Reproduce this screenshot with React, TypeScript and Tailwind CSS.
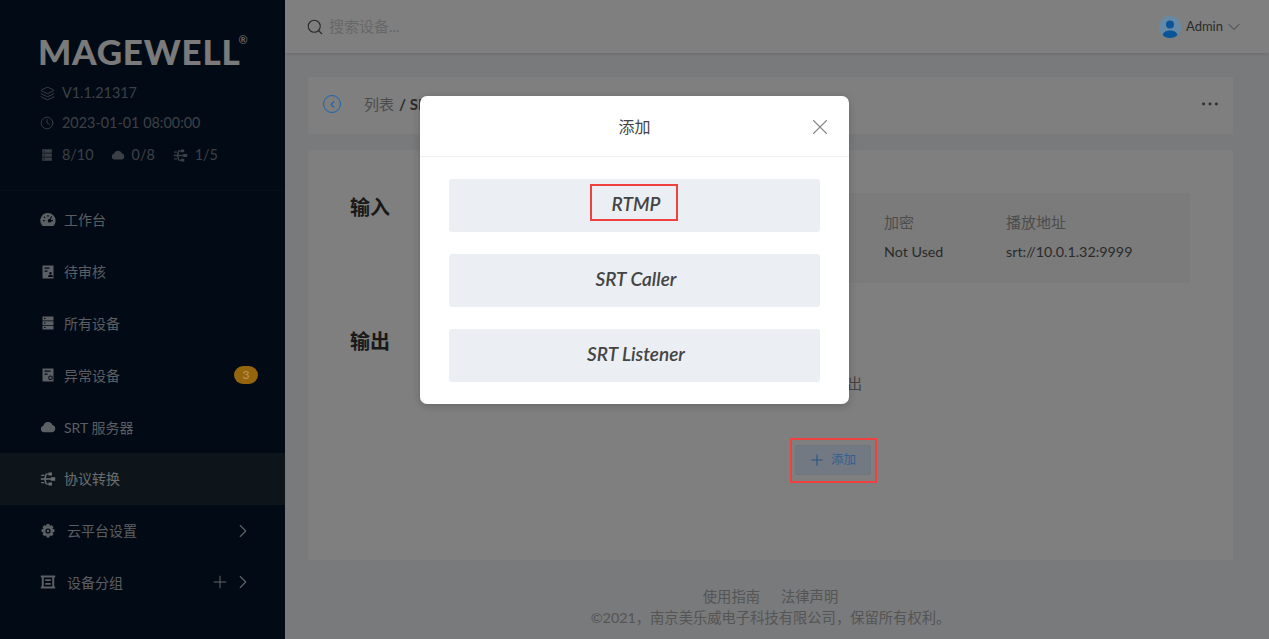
import React from "react";
import { ChevronDown, ChevronLeft, ChevronRight, Clock, Layers, MoreHorizontal, Plus, Search, X } from "lucide-react";

const FONT = 'font-["Lato","Noto_Sans_CJK_SC",sans-serif]';

const I = ({ children, className = "" }: { children: React.ReactNode; className?: string }) => (
  <svg viewBox="0 0 16 16" fill="currentColor" className={className}>{children}</svg>
);
const Gauge = ({ className }: { className?: string }) => (
  <I className={className}>
    <path fillRule="evenodd" d="M8 1a7.600 7.600 0 0 1 7.600 7.600c0 2-.7 3.800-1.900 5.100-.2.200-.4.300-.7.300H3c-.3 0-.5-.1-.7-.3A7.600 7.600 0 0 1 8 1Zm-.6 2v1.700h1.200V3H7.400Zm3.700 1-1.300 3.100a1.700 1.700 0 1 0 1 .5L12 4.400l-.9-.4ZM3 8v1.200h1.700V8H3Zm8.300 0v1.200H13V8h-1.700ZM4.300 4.200l-.8.800 1.200 1.200.8-.8-1.200-1.200Z" />
  </I>
);
const DocUser = ({ className }: { className?: string }) => (
  <I className={className}>
    <path fillRule="evenodd" d="M2.500 1.500h11v13h-11v-13Zm2 2v1.200h5V3.500h-5Zm0 3v1.200h3V6.500h-3Zm6 1.500a1.300 1.300 0 1 0 0 2.600 1.300 1.300 0 0 0 0-2.600ZM8 13h5c0-1.400-1-2.200-2.500-2.200S8 11.600 8 13Z" />
  </I>
);
const DocWarn = ({ className }: { className?: string }) => (
  <I className={className}>
    <path fillRule="evenodd" d="M2.500 1.500h11v13h-11v-13Zm2 2v1.200h6V3.500h-6Zm0 3v1.200h3V6.500h-3Zm6 2a2.300 2.300 0 1 0 0 4.600 2.300 2.300 0 0 0 0-4.600Zm0 1a1.300 1.300 0 1 1 0 2.600 1.300 1.300 0 0 1 0-2.600Z" />
  </I>
);
const Server = ({ className }: { className?: string }) => (
  <I className={className}>
    <path fillRule="evenodd" d="M2.500 1.500h11v4h-11v-4Zm0 4.800h11v3.700h-11V6.300Zm0 4.500h11v3.700h-11v-3.700ZM4 3v1h1.500V3H4Zm0 4.600v1h1.500v-1H4Zm0 4.500v1h1.500v-1H4Z" />
  </I>
);
const Cloud = ({ className }: { className?: string }) => (
  <I className={className}>
    <path d="M4 13.200a3.300 3.300 0 0 1-.6-6.500A4.800 4.800 0 0 1 12.500 6a3.700 3.700 0 0 1-.2 7.200H4Z" />
  </I>
);
const Flow = ({ className }: { className?: string }) => (
  <I className={className}>
    <path d="M8.500 1.500H12v3H8.500v-.9H6.900L5.700 7.200h5.100v-.9h4.400v3.400h-4.400v-.9H5.700l1.200 3.600h1.600v-.9H12v3H8.500v-.9H5.700L4.200 8.800H.8V7.200h3.400l1.500-4.800h2.800v-.9ZM1.200 3.800h3.200V5H1.200V3.800Zm0 7.200h3.200v1.200H1.200V11Z" />
  </I>
);
const Gear = ({ className }: { className?: string }) => (
  <I className={className}>
    <path fillRule="evenodd" d="M6.600 1h2.800l.4 2 1.700-.9 2 2-1 1.700 2 .5v2.800l-2 .5 1 1.700-2 2-1.700-1-.4 2.200H6.600l-.4-2.200-1.700 1-2-2 1-1.700-2-.5V6.300l2-.5-1-1.700 2-2 1.700.9.400-2ZM8 5.400a2.600 2.600 0 1 0 0 5.200 2.600 2.600 0 0 0 0-5.200Zm0 1.300a1.300 1.300 0 1 1 0 2.600 1.300 1.300 0 0 1 0-2.600Z" />
  </I>
);
const Group = ({ className }: { className?: string }) => (
  <I className={className}>
    <path fillRule="evenodd" d="M.8 1.500h14.400v2h-1v9h1v2H.8v-2h1v-9h-1v-2Zm3 2v9h8.400v-9H3.800Zm1.400 1.700h5.600v1.700H5.200V5.200Zm0 3.800h5.600v1.700H5.200V9Z" />
  </I>
);

const NAV = [
  { label: "工作台", Icon: Gauge },
  { label: "待审核", Icon: DocUser },
  { label: "所有设备", Icon: Server },
  { label: "异常设备", Icon: DocWarn, badge: "3" },
  { label: "SRT 服务器", Icon: Cloud },
  { label: "协议转换", Icon: Flow, active: true },
  { label: "云平台设置", Icon: Gear, sub: true },
  { label: "设备分组", Icon: Group, sub: true, plus: true },
];

function Sidebar() {
  return (
    <aside className="w-[285px] shrink-0 h-full bg-[#04152a] flex flex-col">
      <div className="h-[191px] shrink-0 border-b border-[#0d1f33] pl-[40px] pt-[33px] text-[#76808c]">
        <div className="flex items-start h-[36px] text-[#f4f4f4] ml-[-2px]">
          <span className="text-[35px] leading-[36px] font-black tracking-[0.8px]">MAGEWELL</span>
          <span className="text-[11px] leading-[11px] ml-[-2px] mt-[1px]">®</span>
        </div>
        <div className="mt-[14px] flex items-center h-[20px] text-[14.4px]">
          <Layers className="w-[15px] h-[15px] mr-[7px]" strokeWidth={1.5} />V1.1.21317
        </div>
        <div className="mt-[10px] flex items-center h-[20px] text-[14.4px]">
          <Clock className="w-[14px] h-[14px] mr-[8px]" strokeWidth={1.5} />2023-01-01 08:00:00
        </div>
        <div className="mt-[12px] flex items-center h-[20px] text-[14.4px]">
          <Server className="w-[14px] h-[14px] mr-[8px]" />8/10
          <Cloud className="w-[14px] h-[14px] ml-[17px] mr-[7px]" />0/8
          <Flow className="w-[15px] h-[15px] ml-[18px] mr-[7px]" />1/5
        </div>
      </div>
      <nav className="pt-[3px] flex flex-col">
        {NAV.map(({ label, Icon, badge, active, sub, plus }) => (
          <div
            key={label}
            className={`h-[51.800px] flex items-center pl-[40px] text-[14px] ${active ? "bg-[#1a2a36] text-[#d5dade]" : "text-[#b4bac2]"}`}
          >
            <Icon className={`w-[16px] h-[16px] ${active ? "text-[#d5dade]" : "text-[#b8bec6]"} ${sub ? "mr-[11px]" : "mr-[8px]"}`} />
            <span className="flex-1">{label}</span>
            {badge && (
              <span className="relative z-10 mr-[27px] w-[24px] h-[18px] rounded-full bg-[#94640f] text-[#b99a60] text-[12px] leading-[18px] text-center">
                {badge}
              </span>
            )}
            {plus && <Plus className="w-[20px] h-[20px] mr-[2px] text-[#c0c4ca]" strokeWidth={1.2} />}
            {sub && <ChevronRight className="w-[22px] h-[22px] mr-[31px] text-[#c0c4ca]" strokeWidth={1.2} />}
          </div>
        ))}
      </nav>
    </aside>
  );
}

function Main() {
  return (
    <main className="flex-1 min-w-0 h-full flex flex-col bg-[#f3f4f7]">
      <header className="h-[53px] shrink-0 bg-white shadow-[0_1px_3px_rgba(0,0,0,0.12)] flex items-center pl-[21px] pr-[25px]">
        <Search className="w-[18px] h-[18px] text-[#555]" strokeWidth={1.5} />
        <span className="ml-[5px] text-[15px] text-[#d0d0d0]">搜索设备...</span>
        <div className="ml-auto flex items-center">
          <span className="relative z-10 w-[22px] h-[22px] rounded-full bg-[#668aa6] overflow-hidden flex items-end justify-center">
            <svg viewBox="0 0 22 22" className="w-[22px] h-[22px]" fill="#0a5497">
              <circle cx="11" cy="8.500" r="4" />
              <path d="M3.500 20c.3-4 3.500-5.500 7.500-5.500s7.200 1.500 7.500 5.500l-3 2h-9l-3-2Z" />
            </svg>
          </span>
          <span className="ml-[5px] text-[13px] text-[#555]">Admin</span>
          <ChevronDown className="ml-[1px] w-[20px] h-[20px] text-[#777]" strokeWidth={1.1} />
        </div>
      </header>
      <div className="flex-1 flex flex-col pl-[23px] pt-[24px] pr-[36px]">
        <div className="h-[57px] bg-white flex items-center pl-[15px] pr-[12px] pb-[3px] text-[15px]">
          <span className="relative z-10 w-[18px] h-[18px] rounded-full border-[1.500px] border-[#1a64b4] flex items-center justify-center text-[#1a64b4]">
            <ChevronLeft className="w-[11px] h-[11px]" strokeWidth={2.500} />
          </span>
          <span className="ml-[23px] text-[#999]">列表</span>
          <span className="ml-[5px] font-bold text-[#555]">/ SRT</span>
          <MoreHorizontal className="ml-auto w-[22px] h-[22px] text-[#555]" strokeWidth={1.2} />
        </div>
        <div className="mt-[16px] h-[410px] bg-white pl-[42px] pr-[43px] pt-[43px] flex">
          <div className="w-[126px] shrink-0 text-[20px] font-bold text-[#333]">
            <div className="h-[29px] leading-[29px]">输入</div>
            <div className="mt-[105px] h-[29px] leading-[29px]">输出</div>
          </div>
          <div className="flex-1 flex flex-col">
            <div className="h-[90px] bg-[#f6f6f6] flex justify-end text-[14.300px] rounded-[2px] pt-[18px]">
              <div className="w-[122px]">
                <div className="h-[26px] text-[#999] text-[15px]">加密</div>
                <div className="mt-[4px] text-[#555]">Not Used</div>
              </div>
              <div className="w-[184px]">
                <div className="h-[26px] text-[#999] text-[15px]">播放地址</div>
                <div className="mt-[4px] text-[#555]">srt://10.0.1.32:9999</div>
              </div>
            </div>
            <div className="mt-[91px] text-center text-[14.500px] leading-[20px] text-[#888]">暂无输出</div>
            <button className="relative z-10 mt-[51px] self-center w-[76px] h-[30px] rounded-[2px] bg-[#727983] border border-[#6e7681] text-[#33608f] text-[12.500px] flex items-center justify-center gap-[5px] pr-[2px]">
              <Plus className="w-[18px] h-[18px] text-[#245488]" strokeWidth={1.4} />添加
            </button>
          </div>
        </div>
        <div className="mt-[26px] text-center text-[14.300px] leading-[21px] text-[#aaa]">
          <div className="flex justify-center gap-[21px]"><span>使用指南</span><span>法律声明</span></div>
          <div>©2021，南京美乐威电子科技有限公司，保留所有权利。</div>
        </div>
      </div>
    </main>
  );
}

function Option({ label, mark, className = "" }: { label: string; mark?: boolean; className?: string }) {
  return (
    <div className={`relative h-[53px] rounded-[3px] bg-[#ebeff3] flex items-center justify-center pl-[3px] pb-[2px] text-[19px] font-semibold italic text-[#444] ${className}`}>
      {label}
      {mark && <span className="absolute left-[141px] top-[5px] w-[88px] h-[37px] border-2 border-[#f04040]" />}
    </div>
  );
}

export default function App() {
  return (
    <div className={`relative w-[1269px] h-[639px] overflow-hidden flex ${FONT}`}>
      <Sidebar />
      <Main />
      <div className="absolute inset-0 bg-black/50" />
      <span className="absolute z-20 left-[790px] top-[438px] w-[87px] h-[45px] border-2 border-[#f04040]" />
      <div className="absolute z-20 left-[420px] top-[96px] w-[429px] h-[308px] bg-white rounded-[7px] shadow-[0_2px_8px_rgba(0,0,0,0.2)]">
        <div className="relative h-[61px] border-b border-[#eceef3] flex items-center justify-center pt-[2px] text-[16px] text-[#444]">
          添加
          <X className="absolute right-[16px] top-[18px] w-[26px] h-[26px] text-[#888]" strokeWidth={1} />
        </div>
        <div className="pt-[22px] px-[29px] flex flex-col gap-[22px]">
          <Option label="RTMP" mark />
          <Option label="SRT Caller" />
          <Option label="SRT Listener" />
        </div>
      </div>
    </div>
  );
}
